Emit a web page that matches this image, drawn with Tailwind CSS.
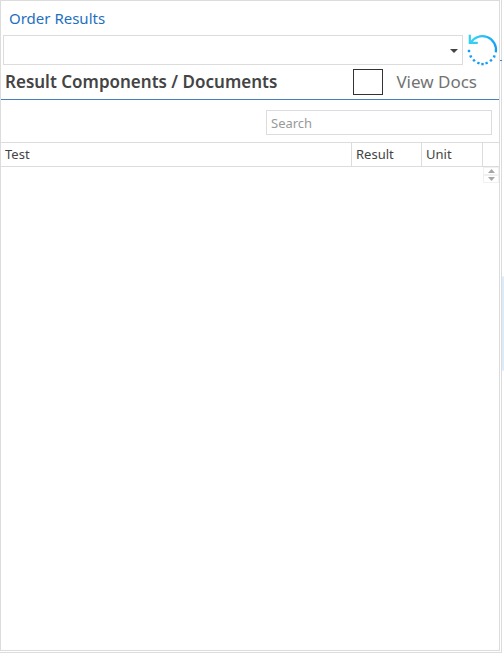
<!DOCTYPE html>
<html lang="en">
<head>
    <meta charset="UTF-8">
    <meta name="viewport" content="width=device-width, initial-scale=1.0">
    <title>Order Results</title>
    <script src="https://cdn.jsdelivr.net/npm/@tailwindcss/browser@4"></script>
</head>
<body class="flex min-h-screen bg-white pb-px font-['Noto_Sans','Open_Sans',sans-serif] text-[#444444]">

    <div class="relative flex flex-1 border-r border-b border-[#dcdcdc] pr-px pb-px">
        <main class="flex min-w-0 flex-1 flex-col border border-[#dcdcdc]">
            <label for="order" class="flex h-[34px] items-center px-2 text-[15px] text-[#1e70bf]">Order Results</label>

            <div class="flex items-center pl-[2px]">
                <div class="relative flex-1">
                    <select id="order" class="block h-[30px] w-full appearance-none border border-[#dcdcdc] bg-white px-2 text-sm">
                        <option></option>
                    </select>
                    <svg class="pointer-events-none absolute top-[14px] right-[5px] h-1 w-2" viewBox="0 0 8 4" fill="#444444">
                        <path d="M0 0h8L4 4z"/>
                    </svg>
                </div>
                <button type="button" aria-label="Refresh" class="-my-px ml-1 h-8 w-8">
                    <svg class="h-8 w-8" viewBox="0 0 32 32" fill="none">
                        <defs>
                            <linearGradient id="arc" x1="3" y1="8" x2="30" y2="16" gradientUnits="userSpaceOnUse">
                                <stop offset="0" stop-color="#3bd5f0"/>
                                <stop offset="1" stop-color="#119df5"/>
                            </linearGradient>
                        </defs>
                        <path d="M3.500 9A13.700 13.700 0 0 1 28.800 18.400" stroke="url(#arc)" stroke-width="2.2"/>
                        <path d="M2.800 .8V8.900H10.800" stroke="#35cdf1" stroke-width="2.2"/>
                        <g fill="#119df5">
                            <path d="M26.500 20.900l2.300 .8-.8 2.200-2.300-.8z"/>
                            <path d="M23.900 24.700l1.800 1.600-1.600 1.800-1.800-1.600z"/>
                            <path d="M20.200 27.500l.9 2.200-2.200.9-.9-2.200z"/>
                            <path d="M14.300 28.900h2.400v2.400h-2.400z"/>
                            <path d="M10.800 27.500l2.200.9-.9 2.200-2.200-.9z"/>
                            <path d="M7.100 24.700l1.600 1.800-1.800 1.600-1.600-1.800z"/>
                            <path d="M4.500 20.900l.8 2.200-2.300.8-.8-2.200z"/>
                            <path d="M.8 15.800h2.400v2.400H.8z"/>
                        </g>
                    </svg>
                </button>
            </div>

            <div class="flex h-[35px] items-center border-b border-[#4581b8] pr-[22px] pl-1">
                <h1 class="flex-1 text-[17px] font-semibold whitespace-nowrap">Result Components / Documents</h1>
                <label class="flex items-center gap-[13px] text-[17px] whitespace-nowrap text-[#737373]">
                    <input type="checkbox" class="h-[26px] w-[30px] appearance-none border border-[#333333] bg-white checked:bg-[#1e70bf]">
                    View Docs
                </label>
            </div>

            <div class="flex justify-end pt-[10px] pr-[7px] pb-[7px]">
                <input type="search" aria-label="Search" placeholder="Search" class="h-[25px] w-[226px] appearance-none border border-[#dcdcdc] px-1 text-[13px] placeholder:text-[#999999]">
            </div>

            <table class="w-full table-fixed border-separate border-spacing-0 text-left text-[13px]">
                <thead>
                    <tr class="h-[25px]">
                        <th class="border-y border-r border-[#dcdcdc] px-1 font-normal">Test</th>
                        <th class="w-[70px] border-y border-r border-[#dcdcdc] px-1 font-normal">Result</th>
                        <th class="w-[61px] border-y border-r border-[#dcdcdc] px-1 font-normal">Unit</th>
                        <th class="w-4 border-y border-[#dcdcdc]"></th>
                    </tr>
                </thead>
            </table>

            <div class="flex flex-col items-end">
                <button type="button" aria-label="Scroll up" class="flex h-2 w-4 items-center justify-center border border-[#f0f0f0]">
                    <svg class="h-1 w-[7px]" viewBox="0 0 7 4" fill="#a6a6a6"><path d="M0 4h7L3.500 0z"/></svg>
                </button>
                <button type="button" aria-label="Scroll down" class="flex h-2 w-4 items-center justify-center border border-[#f0f0f0]">
                    <svg class="h-1 w-[7px]" viewBox="0 0 7 4" fill="#a6a6a6"><path d="M0 0h7L3.500 4z"/></svg>
                </button>
            </div>
        </main>
        <span class="absolute top-[60px] -right-px h-px w-[2px] bg-[#4581b8]"></span>
    </div>

    <aside class="w-[2px] pt-[276px]">
        <div class="h-[95px] rounded-l-xs bg-[#dcebf9]"></div>
    </aside>

</body>
</html>
